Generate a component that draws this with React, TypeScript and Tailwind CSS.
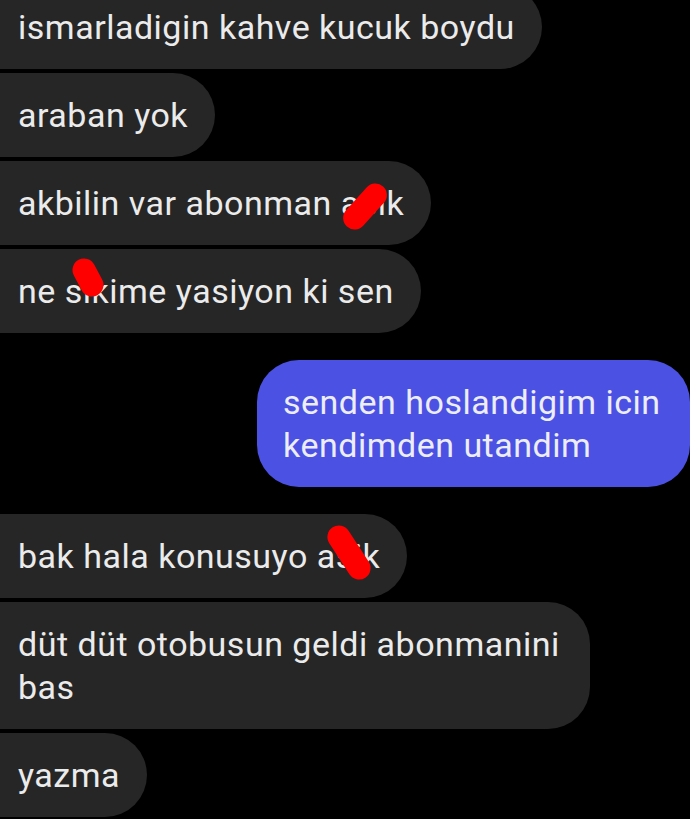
import React from "react";

type Mark = { left: number; top: number; w: number; rot: string };

interface BubbleProps {
    text: string;
    mark?: Mark;
    className?: string;
}

function Scribble(props: { mark: Mark }) {
    const m = props.mark;
    return <span
        className="absolute h-[23px] rounded-full bg-[#ff0000]"
        style={{ left: m.left, top: m.top, width: m.w, transform: `rotate(${m.rot})` }}
    />
}

function Incoming(props: BubbleProps) {
    return <div className={`flex justify-start ${props.className ?? ""}`}>
        <div className="relative ml-[-20px] max-w-[610px] rounded-l-[14px] rounded-r-[42px] bg-[#262626] pl-[38px] pr-[27px] py-[20.5px] text-[#ebebeb]">
            {props.text}
            {props.mark && <Scribble mark={props.mark} />}
        </div>
    </div>
}

function Outgoing(props: BubbleProps) {
    return <div className={`flex justify-end ${props.className ?? ""}`}>
        <div className="max-w-[433px] rounded-[42px] bg-[#4b51e2] pl-[26px] pr-[20px] py-[20.5px] text-[#ededf8]">
            {props.text}
        </div>
    </div>
}

export default function App() {
    return <div className="h-[819px] w-[690px] overflow-hidden bg-black font-['Roboto','Liberation_Sans',sans-serif] text-[34px] leading-[43px] tracking-[0.5px]">
        <div className="mt-[-15px] flex flex-col gap-[4px]">
            <Incoming text="ismarladigin kahve kucuk boydu" />
            <Incoming text="araban yok" />
            <Incoming text="akbilin var abonman asik" mark={{ left: 358, top: 33.5, w: 54, rot: "-48deg" }} />
            <Incoming text="ne sikime yasiyon ki sen" mark={{ left: 87.5, top: 17, w: 40, rot: "62deg" }} />
        </div>
        <Outgoing text="senden hoslandigim icin kendimden utandim" className="mt-[27px]" />
        <div className="mt-[27px] flex flex-col gap-[4px]">
            <Incoming text="bak hala konusuyo asik" mark={{ left: 338.5, top: 26.5, w: 60, rot: "57deg" }} />
            <Incoming text="düt düt otobusun geldi abonmanini bas" />
            <Incoming text="yazma" />
        </div>
    </div>
}
